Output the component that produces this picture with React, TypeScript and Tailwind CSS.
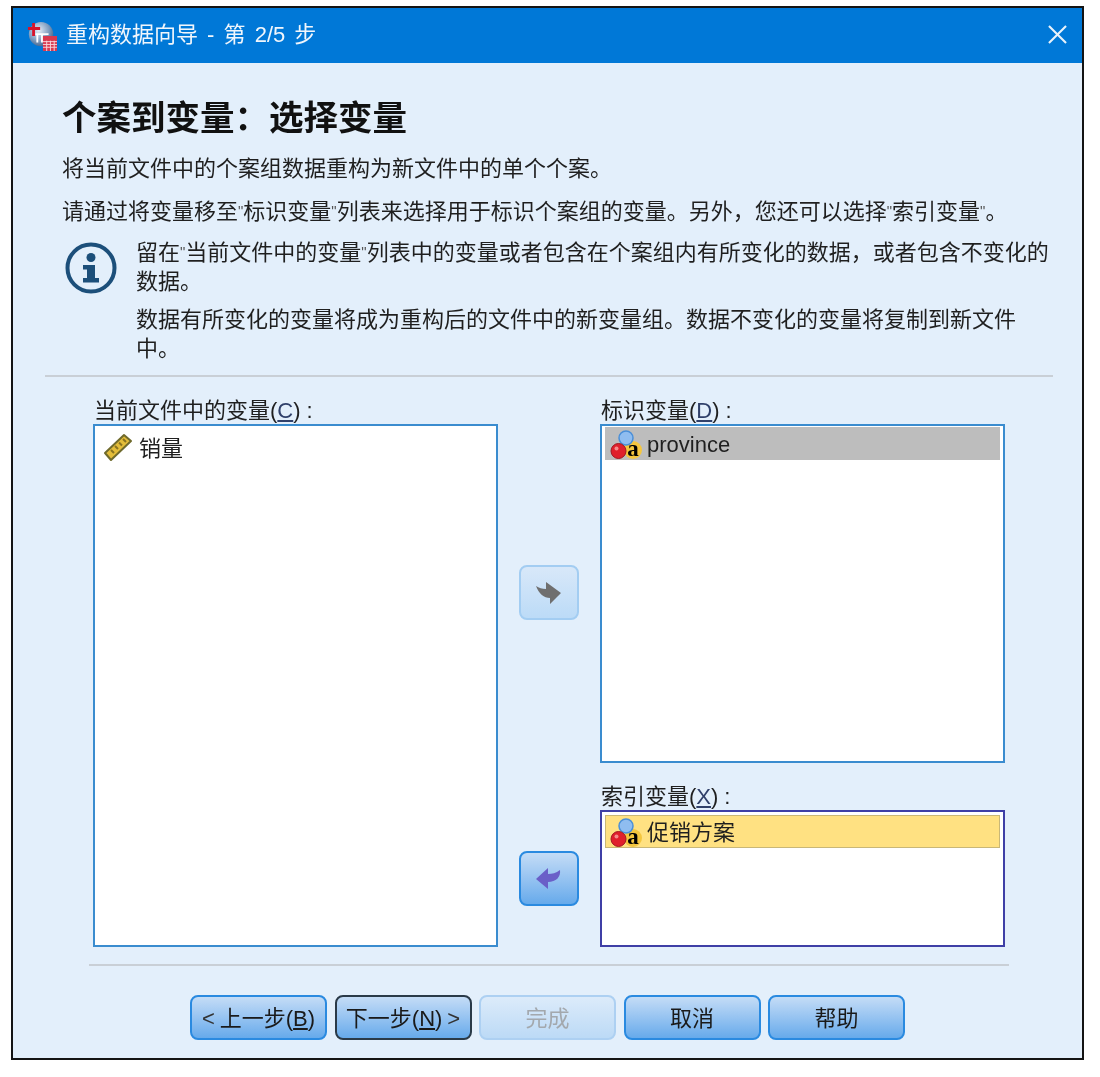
import React from "react";

const font = { fontFamily: '"Liberation Sans", "Noto Sans CJK SC", sans-serif' };

function AppIcon() {
  return (
    <svg width="30" height="30" viewBox="0 0 32 32" className="shrink-0">
      <defs>
        <radialGradient id="ball" cx="0.4" cy="0.35" r="0.7">
          <stop offset="0" stopColor="#e6eef7" />
          <stop offset="0.6" stopColor="#7f9dc0" />
          <stop offset="1" stopColor="#3f5f88" />
        </radialGradient>
      </defs>
      <circle cx="15" cy="14" r="13" fill="url(#ball)" />
      <path d="M9 14h14M11 14v9M16 14v9" stroke="#fff" strokeWidth="2" fill="none" />
      <path d="M7 2v14M1 8h13" stroke="#d8132a" strokeWidth="3" fill="none" />
      <rect x="17" y="16" width="15" height="16" fill="#d9384e" />
      <path d="M17 22h15M17 25h15M17 28h15M21 21v11M25 21v11M29 21v11" stroke="#fff" strokeWidth="1" opacity="0.8" />
    </svg>
  );
}

function InfoIcon() {
  return (
    <svg width="52" height="52" viewBox="0 0 52 52" className="shrink-0">
      <circle cx="26" cy="26" r="23.5" fill="none" stroke="#1c4f7a" strokeWidth="4" />
      <circle cx="26" cy="15.500" r="4.500" fill="#1c4f7a" />
      <path d="M18 23h12v13h4v4.500H18V36h4v-8.500h-4z" fill="#1c4f7a" />
    </svg>
  );
}

function RulerIcon() {
  return (
    <svg width="30" height="30" viewBox="0 0 30 30" className="shrink-0">
      <path d="M2 21 21 3l7 6L8 28z" fill="#e3bd3a" stroke="#6f6a2c" strokeWidth="2" strokeLinejoin="round" />
      <path d="M8 18l3 3M12 14l3 3M16 10.500l3 3M20 7l3 3" stroke="#8a7420" strokeWidth="2" />
    </svg>
  );
}

function NominalIcon() {
  return (
    <svg width="32" height="32" viewBox="0 0 32 32" className="shrink-0">
      <circle cx="23" cy="22" r="9" fill="#f4c63f" />
      <circle cx="16" cy="10" r="7" fill="#8fbdf0" stroke="#4a8fd8" strokeWidth="1.500" />
      <circle cx="8.500" cy="23" r="7.500" fill="#e0202c" stroke="#a01822" strokeWidth="1" />
      <circle cx="6.500" cy="20.500" r="2" fill="#f58b8b" />
      <text x="23" y="28" textAnchor="middle" fontSize="23" fontWeight="700" fontFamily="Liberation Serif, serif" fill="#000">a</text>
    </svg>
  );
}

function ArrowRight() {
  return (
    <svg width="28" height="24" viewBox="0 0 28 24">
      <path d="M1 5c3 2 6 3 10 3V1l15 11-11 11v-6c-6 0-11-4-14-12z" fill="#6f6f6f" />
    </svg>
  );
}

function ArrowLeft() {
  return (
    <svg width="28" height="24" viewBox="0 0 28 24">
      <path d="M1 12 13 1v6c4 0 8-1 12-4 1 7-4 12-12 12v7z" fill="#6a5fc8" />
    </svg>
  );
}

function Q() {
  return <span className="text-[15px] leading-none align-[3px] text-[#555]">"</span>;
}

function Shortcut({ label, k }: { label: string; k: string }) {
  return (
    <div className="h-[28px] text-[22px] leading-[30px] text-[#1f1f1f] pl-px whitespace-nowrap">
      {label}(<span className="underline underline-offset-2 text-[#30406a]">{k}</span>)<span className="ml-[6px]">:</span>
    </div>
  );
}

function DialogButton({
  children,
  variant = "normal",
  className = "",
}: {
  children: React.ReactNode;
  variant?: "normal" | "default" | "disabled";
  className?: string;
}) {
  const skin =
    variant === "disabled"
      ? "border-[#add0f2] from-[#dcebfa] to-[#bcdaf6] text-[#a3a8ad]"
      : variant === "default"
        ? "border-[#2a3a48] from-[#c4dcf6] to-[#66aaeb] text-[#1a1a1a]"
        : "border-[#2a8ae0] from-[#c4dcf6] to-[#66aaeb] text-[#1a1a1a]";
  return (
    <div
      className={`h-[45px] rounded-[8px] border-2 bg-gradient-to-b flex items-center justify-center pt-[2px] text-[22px] leading-none whitespace-nowrap ${skin} ${className}`}
    >
      {children}
    </div>
  );
}

export default function App() {
  return (
    <div className="h-[1077px] w-[1100px] bg-white pt-[6px] pl-[11px]" style={font}>
      <div className="flex h-[1054px] w-[1073px] flex-col border-2 border-[#141414] bg-[#e3effb] blur-[0.6px]">
        <div className="flex h-[55px] shrink-0 items-center bg-[#0078d7] pl-[14px] pr-[15px]">
          <AppIcon />
          <span className="ml-[9px] mb-px text-[22px] leading-none text-[#f0f6fc] whitespace-nowrap [word-spacing:3px]">重构数据向导 - 第 2/5 步</span>
          <svg width="19" height="19" viewBox="0 0 20 20" className="ml-auto mb-[2px]">
            <path d="M1 1l18 18M19 1 1 19" stroke="#e8f2fb" strokeWidth="2.200" fill="none" />
          </svg>
        </div>

        <div className="flex min-h-0 flex-1 flex-col">
          <div className="pl-[49px] pt-[35px]">
            <h1 className="text-[34.500px] leading-[40px] font-bold text-[#111] whitespace-nowrap">个案到变量&#xFF1A;选择变量</h1>
            <p className="mt-[16px] text-[22px] leading-[30px] text-[#1f1f1f] whitespace-nowrap">将当前文件中的个案组数据重构为新文件中的单个个案。</p>
            <p className="mt-[13px] h-[30px] text-[22px] leading-[30px] text-[#1f1f1f] whitespace-nowrap">请通过将变量移至<Q />标识变量<Q />列表来选择用于标识个案组的变量。另外&#xFF0C;您还可以选择<Q />索引变量<Q />。</p>
          </div>

          <div className="mt-[11px] flex pl-[52px]">
            <div className="mt-[4px]">
              <InfoIcon />
            </div>
            <div className="ml-[19px] w-[921px] text-[22px] leading-[29px] text-[#1f1f1f]">
              <p>留在<Q />当前文件中的变量<Q />列表中的变量或者包含在个案组内有所变化的数据&#xFF0C;或者包含不变化的<br />数据。</p>
              <p className="mt-[9px]">数据有所变化的变量将成为重构后的文件中的新变量组。数据不变化的变量将复制到新文件<br />中。</p>
            </div>
          </div>

          <div className="ml-[32px] mr-[29px] mt-[12px] h-[2px] shrink-0 bg-[#c9cfd6]" />

          <div className="mt-[19px] flex pl-[80px]">
            <div className="flex w-[405px] flex-col">
              <Shortcut label="当前文件中的变量" k="C" />
              <div className="h-[523px] border-2 border-[#3a8ccf] bg-white pl-[8px] pt-[4px]">
                <div className="flex items-center">
                  <RulerIcon />
                  <span className="ml-[6px] mt-[4px] text-[22px] leading-[30px] text-[#1f1f1f]">销量</span>
                </div>
              </div>
            </div>

            <div className="flex w-[102px] flex-col items-center">
              <div className="mt-[169px] flex h-[55px] w-[60px] items-center justify-center rounded-[8px] border-2 border-[#a3cdf2] bg-gradient-to-b from-[#d8e8f9] to-[#bcdbf7]">
                <ArrowRight />
              </div>
              <div className="mt-[231px] flex h-[55px] w-[60px] items-center justify-center rounded-[8px] border-2 border-[#2a8ae0] bg-gradient-to-b from-[#c4dcf6] to-[#66aaeb]">
                <ArrowLeft />
              </div>
            </div>

            <div className="flex w-[405px] flex-col">
              <Shortcut label="标识变量" k="D" />
              <div className="h-[339px] border-2 border-[#3a8ccf] bg-white px-[3px] pt-px">
                <div className="flex h-[33px] items-center bg-[#bdbdbd] pl-[5px]">
                  <NominalIcon />
                  <span className="ml-[5px] mt-[3px] text-[22px] leading-none text-[#1f1f1f]">province</span>
                </div>
              </div>
              <div className="mt-[19px]">
                <Shortcut label="索引变量" k="X" />
              </div>
              <div className="h-[137px] border-2 border-[#3f3fa6] bg-white px-[3px] pt-[3px]">
                <div className="flex h-[33px] items-center border border-[#c9b777] bg-[#ffe182] pl-[4px]">
                  <NominalIcon />
                  <span className="ml-[5px] mt-[2px] text-[22px] leading-none text-[#1f1f1f]">促销方案</span>
                </div>
              </div>
            </div>
          </div>

          <div className="ml-[76px] mr-[73px] mt-[17px] h-[2px] shrink-0 bg-[#c9cfd6]" />

          <div className="mt-[29px] flex pl-[177px] gap-[7.5px]">
            <DialogButton className="w-[137px]"><span className="text-[#333] mr-[5px]">&lt;</span>上一步(<span className="underline underline-offset-2">B</span>)</DialogButton>
            <DialogButton variant="default" className="w-[137px]">下一步(<span className="underline underline-offset-2">N</span>)<span className="text-[#333] ml-[5px]">&gt;</span></DialogButton>
            <DialogButton variant="disabled" className="w-[137px]">完成</DialogButton>
            <DialogButton className="w-[137px]">取消</DialogButton>
            <DialogButton className="w-[137px]">帮助</DialogButton>
          </div>
        </div>
      </div>
    </div>
  );
}
